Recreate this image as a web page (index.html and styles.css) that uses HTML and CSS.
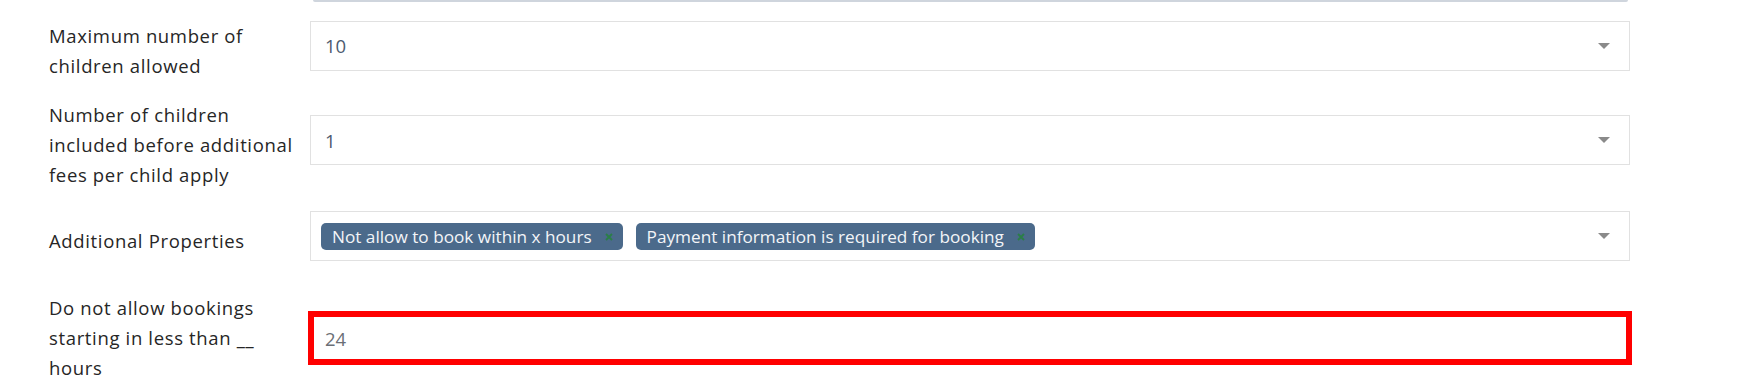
FILE: index.html
```html
<!DOCTYPE html>
<html lang="en">
<head>
<meta charset="utf-8">
<title>Booking settings</title>
<link rel="stylesheet" href="styles.css">
</head>
<body>
<form class="form">
  <div class="label-spacer"></div>
  <div class="prev-field"></div>

  <label class="form-label">Maximum number of children allowed</label>
  <div class="select">
    <span class="select-value">10</span>
    <span class="caret"></span>
  </div>

  <label class="form-label">Number of children included before additional fees per child apply</label>
  <div class="select">
    <span class="select-value">1</span>
    <span class="caret"></span>
  </div>

  <label class="form-label">Additional Properties</label>
  <div class="select select-multi">
    <div class="tags">
      <span class="tag">Not allow to book within x hours<svg class="tag-remove" viewBox="0 0 8 8" width="8" height="8" aria-label="remove"><path d="M1 1L7 7M7 1L1 7"/></svg></span>
      <span class="tag">Payment information is required for booking<svg class="tag-remove" viewBox="0 0 8 8" width="8" height="8" aria-label="remove"><path d="M1 1L7 7M7 1L1 7"/></svg></span>
    </div>
    <span class="caret"></span>
  </div>

  <label class="form-label flush">Do not allow bookings starting in less than __ hours</label>
  <input class="text-input is-flagged" type="text" value="24">
</form>
</body>
</html>
```

FILE: styles.css
```css
* {
  box-sizing: border-box;
}

html, body {
  margin: 0;
  background: #ffffff;
  overflow: hidden;
}

body {
  font-family: "Open Sans", "Noto Sans", sans-serif;
}

.form {
  display: grid;
  grid-template-columns: 250px 1fr;
  grid-template-rows: 2px 87px 102px 90px 114px;
  column-gap: 11px;
  align-items: center;
  padding: 0 109px 0 49px;
  margin: 0;
}

.prev-field {
  height: 2px;
  margin: 0 2px 0 3px;
  background: #cfd5dd;
  border-radius: 0 0 3px 3px;
}

.form-label {
  display: block;
  padding-top: 10px;
  font-size: 18.5px;
  line-height: 30px;
  letter-spacing: 0.65px;
  color: #262626;
}

.form-label.flush {
  padding-top: 0;
}

.select {
  height: 50px;
  display: flex;
  align-items: center;
  justify-content: space-between;
  padding: 0 19px 0 14px;
  border: 1px solid #e1e1e1;
  background: #ffffff;
}

.select-value {
  font-size: 18.5px;
  color: #4d5b70;
}

.caret {
  width: 0;
  height: 0;
  border-left: 6px solid transparent;
  border-right: 6px solid transparent;
  border-top: 6px solid #8a8a8a;
}

.select-multi {
  padding-left: 10px;
}

.tags {
  display: flex;
  gap: 13px;
}

.tag {
  display: inline-flex;
  align-items: center;
  height: 27px;
  padding: 0 10px 0 11px;
  border-radius: 5px;
  background: #4b6a8b;
  color: #f3f5f8;
  font-size: 17.2px;
  white-space: nowrap;
}

.tag-remove {
  margin: 2px 0 0 13px;
  stroke: #2a7f47;
  stroke-width: 1.8;
  fill: none;
}

.text-input {
  display: block;
  width: 100%;
  height: 50px;
  padding: 0 0 0 14px;
  border: 1px solid #e1e1e1;
  background: #ffffff;
  font-family: inherit;
  font-size: 18.5px;
  color: #6b6f76;
}

.text-input.is-flagged {
  outline: 6px solid #ff0000;
  outline-offset: -4px;
}
```
